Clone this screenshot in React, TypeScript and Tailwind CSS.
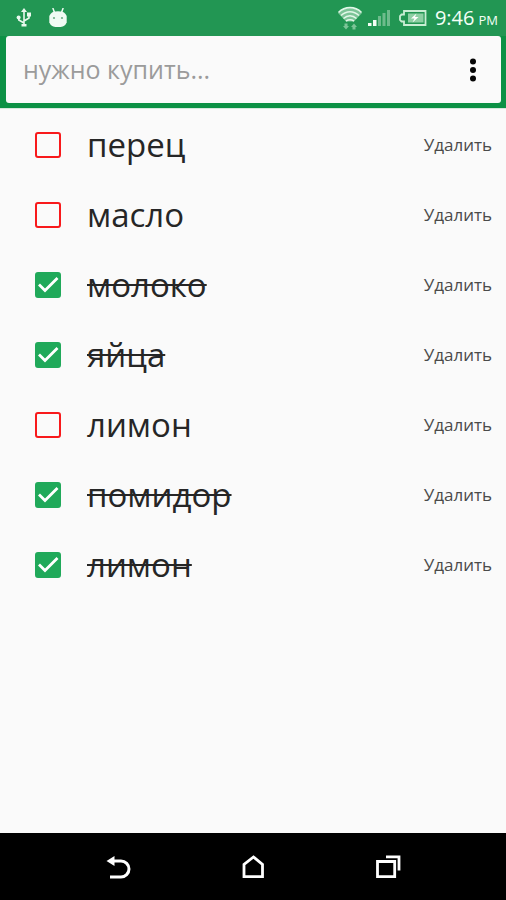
import { useState } from 'react';

type Item = {
    id: number;
    name: string;
    bought: boolean;
};

const initialItems: Item[] = [
    { id: 1, name: 'перец', bought: false },
    { id: 2, name: 'масло', bought: false },
    { id: 3, name: 'молоко', bought: true },
    { id: 4, name: 'яйца', bought: true },
    { id: 5, name: 'лимон', bought: false },
    { id: 6, name: 'помидор', bought: true },
    { id: 7, name: 'лимон', bought: true },
];

function StatusBar() {
    return (
        <div className="flex h-9 items-center justify-between bg-[#229653] pl-4 pr-2 text-white">
            <div className="flex items-center gap-4">
                {/* USB */}
                <svg width="16" height="20" viewBox="0 0 16 20" fill="none" stroke="#e9f8ee" strokeWidth="1.6">
                    <path d="M8 3v14M8 15L2.800 12V9M8 13l5-3V6.500" />
                    <path d="M8 0l3 4H5z" fill="#e9f8ee" stroke="none" />
                    <circle cx="2.600" cy="9.500" r="2" fill="#e9f8ee" stroke="none" />
                    <path d="M11 4.500h4v4h-4z" fill="#e9f8ee" stroke="none" />
                    <path d="M5.500 16h5v2.500h-5z" fill="#e9f8ee" stroke="none" />
                </svg>
                {/* Android */}
                <svg width="20" height="20" viewBox="0 0 20 20">
                    <path d="M5 .500l1.500 4M15 .500l-1.500 4" stroke="#f0fbf3" strokeWidth="1.500" strokeLinecap="round" />
                    <path d="M2.500 6C4 3.800 6 3.200 10 3.200S16 3.800 17.500 6l1.200 2v6.500L17.500 16.500C16 18.500 14 19 10 19s-6-.500-7.500-2.500L1.300 14.500V8z" fill="#f0fbf3" />
                    <circle cx="6" cy="10" r="1.100" fill="#6fae86" />
                    <circle cx="14" cy="10" r="1.100" fill="#6fae86" />
                </svg>
            </div>
            <div className="flex items-center">
                {/* Wi-Fi */}
                <svg className="mr-1" width="26" height="24" viewBox="0 0 26 24" fill="none">
                    <path d="M1 7C8 .500 18 .500 25 7L17 15.500H9z" fill="#7cc497" />
                    <path d="M1.500 6.500C8 0 18 0 24.500 6.500M4 9.500C9.500 4.500 16.500 4.500 22 9.500M6.500 12.500c4-3.500 9-3.500 13 0M9 15c2.500-1.500 5.500-1.500 8 0" stroke="#e2f7e8" strokeWidth="1.600" />
                    <path d="M7.500 17.500h3V20H12l-3 3.500L6 20h1.500zM15.500 23.500h3V21H20l-3-3.500-3 3.500h1.500z" fill="#7cc497" />
                </svg>
                {/* Signal */}
                <svg className="mr-2" width="24" height="20" viewBox="0 0 24 20">
                    <path d="M1 15h3.500v3H1zM6 12h3.500v6H6z" fill="#f3fdf5" />
                    <path d="M11 8h3v10h-3zM15.500 5h3v13h-3zM20 2h3v16h-3z" fill="#6ebb8c" />
                </svg>
                {/* Battery */}
                <svg className="mr-2" width="28" height="18" viewBox="0 0 28 18">
                    <path d="M5 2h21.500v14H5v-3.500H2.500L1 11V7l1.500-1.500H5z" fill="none" stroke="#c9eed4" strokeWidth="1.800" />
                    <path d="M9 4.500h15.500v9H9z" fill="#8dd0a4" />
                    <path d="M17.500 4.500l-5.500 5h3.500l-2 4 6-5.500h-3.500z" fill="#fff" />
                </svg>
                <span className="flex items-baseline gap-1 text-[#f4fff7]">
                    <span className="text-xl">9:46</span>
                    <span className="text-[13px]">PM</span>
                </span>
            </div>
        </div>
    );
}

function ItemRow({ item, onToggle, onDelete }: { item: Item; onToggle: () => void; onDelete: () => void }) {
    return (
        <li className="flex h-[70px] items-center pl-[35px] pr-3.5">
            <label className="flex flex-1 items-center gap-[26px]">
                <span className="grid shrink-0">
                    <input
                        type="checkbox"
                        checked={item.bought}
                        onChange={onToggle}
                        className="col-start-1 row-start-1 size-[26px] appearance-none rounded-[3px] border-2 border-[#f8191b] checked:border-[#20a95a] checked:bg-[#20a95a]"
                    />
                    {item.bought && (
                        <svg className="pointer-events-none col-start-1 row-start-1" width="26" height="26" viewBox="0 0 26 26" fill="none">
                            <path d="M4 12.500l6 6L22.500 6" stroke="#fff" strokeWidth="2.800" />
                        </svg>
                    )}
                </span>
                <span className={`text-[33px] leading-[46px] text-[#262626] ${item.bought ? 'line-through decoration-2' : ''}`}>
                    {item.name}
                </span>
            </label>
            <button onClick={onDelete} className="text-[17px] text-[#4a4a4a]">
                Удалить
            </button>
        </li>
    );
}

function NavigationBar() {
    return (
        <nav className="flex h-[67px] items-center justify-center gap-[107px] bg-black text-white">
            <button aria-label="Назад">
                <svg width="28" height="28" viewBox="0 0 28 28" fill="none">
                    <path d="M8 8h9a8 8 0 0 1 0 16H6" stroke="#fff" strokeWidth="3" />
                    <path d="M2.500 8l8-5v10z" fill="#fff" />
                </svg>
            </button>
            <button aria-label="Домой">
                <svg width="28" height="28" viewBox="0 0 28 28" fill="none">
                    <path d="M5 23.700V11.500L14.500 4l9 7.500v12.200z" stroke="#fff" strokeWidth="2.800" />
                </svg>
            </button>
            <button aria-label="Недавние">
                <svg width="28" height="28" viewBox="0 0 28 28" fill="none" stroke="#fff" strokeWidth="2.800">
                    <path d="M3.500 8.500h17.200v15.200H3.500zM12 3.800h13V17.500" />
                </svg>
            </button>
        </nav>
    );
}

export default function App() {
    const [items, setItems] = useState(initialItems);
    const [text, setText] = useState('');

    const toggleItem = (id: number) => {
        setItems(items.map((item) => (item.id === id ? { ...item, bought: !item.bought } : item)));
    };

    const deleteItem = (id: number) => {
        setItems(items.filter((item) => item.id !== id));
    };

    const addItem = (e: React.FormEvent) => {
        e.preventDefault();
        if (!text.trim()) return;
        setItems([...items, { id: Date.now(), name: text.trim(), bought: false }]);
        setText('');
    };

    return (
        <div className="flex min-h-screen flex-col bg-[#fafafa] font-['Open_Sans','Noto_Sans',sans-serif]">
            <StatusBar />

            {/* New item */}
            <header className="bg-[#0c9145] px-1.5 pb-[5px] pr-[5px]">
                <form onSubmit={addItem} className="flex h-[67px] items-center rounded-[3px] bg-[#fafafa] pl-[17px] pr-4">
                    <input
                        aria-label="нужно купить"
                        value={text}
                        onChange={(e) => setText(e.target.value)}
                        placeholder="нужно купить..."
                        className="min-w-0 flex-1 text-[25px] text-[#1c1c1c] outline-none placeholder:text-[#9b9b9b]"
                    />
                    <button type="button" aria-label="Меню">
                        <svg width="24" height="28" viewBox="0 0 24 28" fill="#050505">
                            <circle cx="12" cy="5.500" r="3" />
                            <circle cx="12" cy="14" r="3" />
                            <circle cx="12" cy="22.500" r="3" />
                        </svg>
                    </button>
                </form>
            </header>

            {/* Shopping list */}
            <ul className="flex-1 border-t border-[#d5e8dc] pt-px">
                {items.map((item) => (
                    <ItemRow key={item.id} item={item} onToggle={() => toggleItem(item.id)} onDelete={() => deleteItem(item.id)} />
                ))}
            </ul>

            <NavigationBar />
        </div>
    );
}
